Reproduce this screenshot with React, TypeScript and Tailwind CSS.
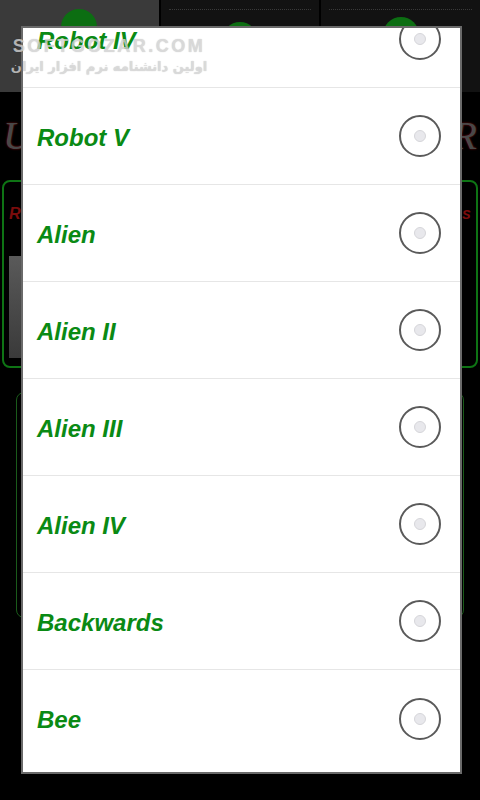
const items = [
  "Robot IV",
  "Robot V",
  "Alien",
  "Alien II",
  "Alien III",
  "Alien IV",
  "Backwards",
  "Bee",
];

function Radio() {
  return (
    <div className="flex h-[42px] w-[42px] items-center justify-center rounded-full border-2 border-[#5a5a5a] bg-white">
      <div className="h-[12px] w-[12px] rounded-full border border-[#d6d6da] bg-[#e8e8ec]" />
    </div>
  );
}

function Tab({ selected, iconTop }: { selected?: boolean; iconTop: string }) {
  return (
    <div
      className={
        "relative flex h-full flex-1 justify-center overflow-hidden " +
        (selected ? "bg-[#3a3a3a]" : "bg-[#121212]")
      }
    >
      {!selected && (
        <div className="absolute left-[8px] right-[8px] top-[9px] border-t border-dotted border-[#3a3a3a]" />
      )}
      <div className={"h-[36px] w-[36px] rounded-full bg-[#0c6e12] " + iconTop} />
    </div>
  );
}

export default function App() {
  return (
    <div className="relative h-[800px] w-[480px] overflow-hidden bg-black font-['Liberation_Sans',sans-serif]">
      {/* app behind the dialog */}
      <div className="flex h-[92px] gap-[2px]">
        <Tab selected iconTop="mt-[9px]" />
        <Tab iconTop="mt-[22px]" />
        <Tab iconTop="mt-[17px]" />
      </div>
      <div className="flex h-[88px] items-center justify-between px-[3px] font-['Liberation_Serif',serif] text-[40px] italic text-[#484848] [text-shadow:0_0_2px_#8a1010]">
        <span>U</span>
        <span>R</span>
      </div>
      <div className="mx-[2px] h-[188px] rounded-lg border-2 border-[#0e7414] px-[5px] pt-[20px]">
        <div className="flex justify-between text-[16px] font-bold italic text-[#7a0c0c]">
          <span>Record</span>
          <span>s</span>
        </div>
        <div className="mt-[30px] h-[102px] w-[14px] bg-gradient-to-b from-[#5a5a5a] to-[#3a3a3a]" />
      </div>
      <div className="ml-[16px] mr-[16px] mt-[24px] h-[226px] rounded-lg border border-[#1a5a1a]" />

      {/* watermark */}
      <div className="absolute left-[12px] top-[35px] z-20 flex w-[194px] flex-col items-center text-[#e0e0e0]/75 [text-shadow:0_0_1px_rgba(0,0,0,0.25)]">
        <span className="whitespace-nowrap text-[18px] font-bold leading-[22px] tracking-[2.5px]">SOFTGOZAR.COM</span>
        <span className="whitespace-nowrap font-['DejaVu_Sans',sans-serif] text-[13px] font-bold leading-[20px]" dir="rtl">
          اولین دانشنامه نرم افزار ایران
        </span>
      </div>

      {/* dialog */}
      <div className="absolute left-[21px] top-[26px] z-10 h-[748px] w-[441px] overflow-hidden border-2 border-[#6a6a6a] bg-white">
        <div className="mt-[-37px] flex flex-col">
          {items.map((name, i) => (
            <div
              key={name}
              className={
                "flex h-[97px] items-center justify-between pl-[14px] pr-[19px] " +
                (i < items.length - 1 ? "border-b border-[#e6e6e6]" : "")
              }
            >
              <span className="pt-[3px] text-[24px] font-bold italic text-[#0a8a14]">{name}</span>
              <Radio />
            </div>
          ))}
        </div>
      </div>
    </div>
  );
}
